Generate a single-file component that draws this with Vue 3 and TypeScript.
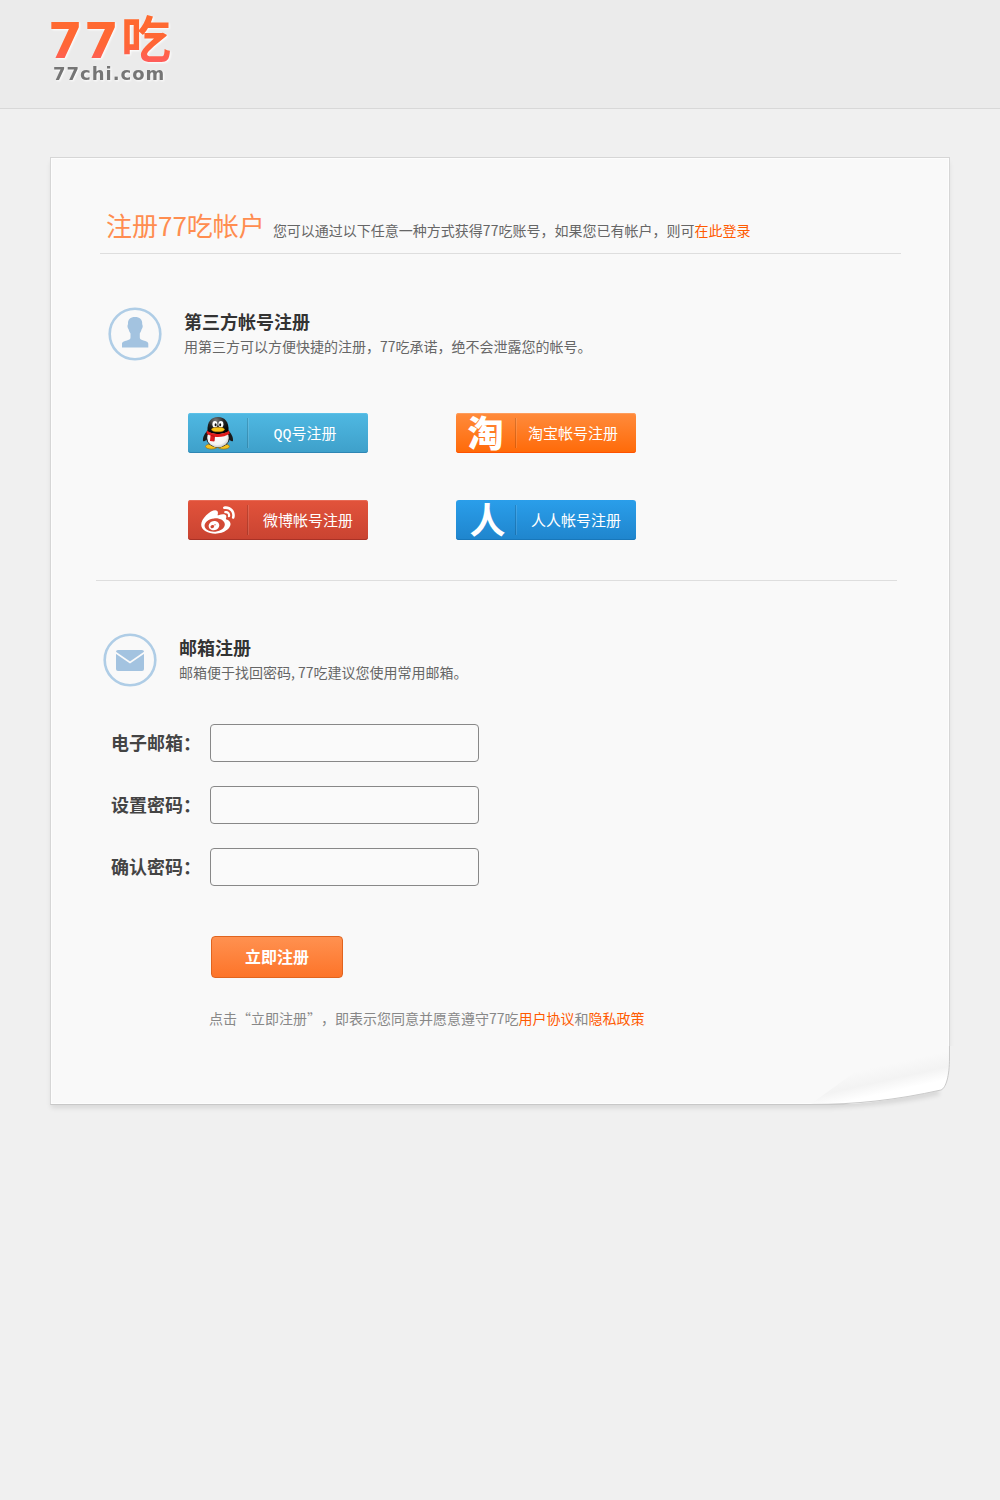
<script setup lang="ts">
import { reactive } from 'vue'

interface Field {
  id: 'email' | 'password' | 'confirm'
  label: string
  type: string
}

const fields: Field[] = [
  { id: 'email', label: '电子邮箱：', type: 'email' },
  { id: 'password', label: '设置密码：', type: 'password' },
  { id: 'confirm', label: '确认密码：', type: 'password' },
]

const form = reactive({ email: '', password: '', confirm: '' })
</script>

<template>
  <header class="top">
    <a class="logo" href="#" aria-label="77吃 77chi.com">
      <svg width="124" height="76" viewBox="0 0 124 76">
        <defs>
          <linearGradient id="logo-fill" gradientUnits="userSpaceOnUse" x1="0" y1="6" x2="0" y2="56">
            <stop offset="0" stop-color="#ff6a2e" />
            <stop offset="0.6" stop-color="#ff6637" />
            <stop offset="1" stop-color="#ff5c62" />
          </linearGradient>
        </defs>
        <g fill="url(#logo-fill)">
          <text class="logo-digit" x="-2" y="49">7</text>
          <text class="logo-digit" x="34" y="49">7</text>
          <text class="logo-han" x="71" y="49">吃</text>
        </g>
        <text class="logo-domain" x="3" y="71">77chi.com</text>
      </svg>
    </a>
  </header>

  <main class="panel">
    <div class="heading">
      <h1>注册77吃帐户</h1>
      <p>您可以通过以下任意一种方式获得77吃账号，如果您已有帐户，则可<a href="#">在此登录</a></p>
    </div>

    <section class="block social">
      <div class="intro">
        <svg class="badge" viewBox="0 0 54 54" aria-hidden="true">
          <circle cx="27" cy="27" r="25.3" fill="none" stroke="#afcde6" stroke-width="2.6" />
          <path
            fill="#a3c3e0"
            d="M27 10c4.600 0 7.500 2.600 7.200 6.800 0 1 .6 1.300.5 2.600-.1 1.500-.8 2-1.200 3.200-.4 1.800-1 2.900-1.700 3.800v4.200c0 1.500 1 2 3 2.700 4 1.300 5.500 1.700 5.500 3.700v3.500H14V37c0-2 1.500-2.400 5.500-3.700 2-.7 3-1.200 3-2.700v-4.200c-.8-.9-1.400-2-1.800-3.800-.4-1.200-1.100-1.700-1.200-3.200-.1-1.300.5-1.600.5-2.600C19.700 12.600 22.400 10 27 10z"
          />
        </svg>
        <div class="intro-text">
          <h2>第三方帐号注册</h2>
          <p>用第三方可以方便快捷的注册，77吃承诺，绝不会泄露您的帐号。</p>
        </div>
      </div>

      <div class="providers">
        <button type="button" class="provider qq">
          <span class="mark">
            <svg width="32" height="34" viewBox="0 0 32 34" aria-hidden="true">
              <defs>
                <radialGradient id="qq-head" cx="0.4" cy="0.2" r="0.8">
                  <stop offset="0" stop-color="#7a7a7a" />
                  <stop offset="0.5" stop-color="#222" />
                  <stop offset="1" stop-color="#000" />
                </radialGradient>
                <radialGradient id="qq-belly" cx="0.45" cy="0.4" r="0.65">
                  <stop offset="0" stop-color="#fff" />
                  <stop offset="0.7" stop-color="#f4f4f4" />
                  <stop offset="1" stop-color="#bbb" />
                </radialGradient>
              </defs>
              <ellipse cx="9.500" cy="30.500" rx="6" ry="2.600" fill="#f6c21c" stroke="#a56a00" stroke-width=".6" />
              <ellipse cx="21.500" cy="30.500" rx="6" ry="2.600" fill="#f6c21c" stroke="#a56a00" stroke-width=".6" />
              <path fill="#1a1a1a" d="M6 14C3 17 .5 21 1 25c1.500 1 3.500-1 5-3zM26 14c3 3 5.500 7 5 11-1.500 1-3.500-1-5-3z" />
              <ellipse cx="16" cy="21" rx="12" ry="10.500" fill="#1a1a1a" />
              <ellipse cx="16" cy="22" rx="10.800" ry="9.300" fill="url(#qq-belly)" />
              <path fill="url(#qq-head)" d="M5.500 15C5 6 9 1 16 1s11 5 10.500 14c-3 4-18 4-21 0z" />
              <ellipse cx="12.900" cy="8.300" rx="2.500" ry="3.300" fill="#fff" />
              <ellipse cx="18.900" cy="8.300" rx="2.500" ry="3.300" fill="#fff" />
              <ellipse cx="13.600" cy="8.800" rx="1" ry="1.500" fill="#111" />
              <ellipse cx="18.200" cy="8.800" rx="1" ry="1.500" fill="#111" />
              <ellipse cx="16" cy="13.500" rx="6.500" ry="2.300" fill="#f8c51b" stroke="#b87a00" stroke-width=".5" />
              <path fill="#e01b1b" d="M5 14.500c5 4.500 17 4.500 22 0l.7 3c-4 3-10 4.200-15.200 3.300l-.3 4.800-4.200-.6.500-5.500C6.500 18.900 5 18 4.500 17z" />
              <path fill="none" stroke="#a30d0d" stroke-width=".7" d="M12.500 20.500 9 19.300M12.500 20.500l-.4 4.600" />
            </svg>
          </span>
          <span class="caption">QQ号注册</span>
        </button>

        <button type="button" class="provider taobao">
          <span class="mark glyph" aria-hidden="true">淘</span>
          <span class="caption">淘宝帐号注册</span>
        </button>

        <button type="button" class="provider weibo">
          <span class="mark">
            <svg width="34" height="28" viewBox="0 2 24 20" aria-hidden="true">
              <path
                fill="#fff"
                d="M10.098 20.323c-3.977.391-7.414-1.406-7.672-4.020-.259-2.609 2.759-5.047 6.740-5.441 3.979-.394 7.413 1.404 7.671 4.018.259 2.600-2.759 5.049-6.737 5.439l-.002.004zM9.050 17.219c-.384.616-1.208.884-1.829.602-.612-.279-.793-.991-.406-1.593.379-.595 1.176-.861 1.793-.601.622.263.820.972.442 1.592zm1.270-1.627c-.141.237-.449.353-.689.253-.236-.090-.313-.361-.177-.586.138-.227.436-.346.672-.240.239.090.315.360.180.601l.014-.028zm.176-2.719c-1.893-.493-4.033.450-4.857 2.118-.836 1.704-.026 3.591 1.886 4.210 1.983.640 4.318-.341 5.132-2.179.800-1.793-.201-3.642-2.161-4.149zm7.563-1.224c-.346-.105-.570-.180-.405-.615.375-.977.420-1.804 0-2.404-.781-1.112-2.915-1.053-5.364-.030 0 0-.766.331-.571-.271.376-1.217.315-2.224-.270-2.809-1.338-1.337-4.869.045-7.888 3.080C1.309 10.870 0 13.273 0 15.348c0 3.981 5.099 6.395 10.086 6.395 6.536 0 10.888-3.801 10.888-6.820 0-1.822-1.547-2.854-2.915-3.284v.010zm1.908-5.092c-.766-.856-1.908-1.187-2.960-.962-.436.090-.706.511-.616.932.090.420.511.691.932.602.511-.105 1.067.044 1.442.465.376.421.466.977.316 1.473-.136.406.089.856.510.992.405.119.857-.105.992-.512.330-1.021.120-2.178-.646-3.035l.030.045zm2.418-2.195c-1.576-1.757-3.905-2.419-6.054-1.968-.496.104-.812.587-.706 1.081.104.496.586.813 1.082.707 1.532-.331 3.185.150 4.296 1.383 1.112 1.246 1.429 2.943.947 4.416-.165.480.106 1.007.586 1.157.479.165.991-.104 1.157-.586.675-2.088.241-4.478-1.338-6.235l.030.045z"
              />
            </svg>
          </span>
          <span class="caption">微博帐号注册</span>
        </button>

        <button type="button" class="provider renren">
          <span class="mark glyph" aria-hidden="true">人</span>
          <span class="caption">人人帐号注册</span>
        </button>
      </div>
    </section>

    <section class="block mail">
      <div class="intro">
        <svg class="badge" viewBox="0 0 54 54" aria-hidden="true">
          <circle cx="27" cy="27" r="25.300" fill="none" stroke="#afcde6" stroke-width="2.600" />
          <rect x="13" y="17" width="28" height="21" rx="2" fill="#a3c3e0" />
          <path fill="none" stroke="#fafafa" stroke-width="1.600" d="M12.500 19.500 27 29.500l14.500-10" />
        </svg>
        <div class="intro-text">
          <h2>邮箱注册</h2>
          <p>邮箱便于找回密码, 77吃建议您使用常用邮箱。</p>
        </div>
      </div>

      <form @submit.prevent>
        <div v-for="field in fields" :key="field.id" class="row">
          <label :for="field.id">{{ field.label }}</label>
          <input :id="field.id" v-model="form[field.id]" :type="field.type" />
        </div>
        <button type="submit" class="submit">立即注册</button>
        <p class="terms">点击“立即注册”，即表示您同意并愿意遵守77吃<a href="#">用户协议</a>和<a href="#">隐私政策</a></p>
      </form>
    </section>

    <svg class="curl" width="160" height="70" viewBox="0 0 160 70" aria-hidden="true">
      <defs>
        <linearGradient id="curl-fill" gradientUnits="userSpaceOnUse" x1="88" y1="18" x2="94" y2="45">
          <stop offset="0" stop-color="#f9f9f9" />
          <stop offset="0.55" stop-color="#f3f3f3" />
          <stop offset="1" stop-color="#fff" />
        </linearGradient>
        <filter id="curl-shadow" x="-20%" y="-50%" width="140%" height="200%">
          <feGaussianBlur stdDeviation="2" />
        </filter>
        <clipPath id="curl-outside">
          <path d="M30 59C65 58 100 53 140 44c5-2 8-14 8-32V0h12v70H30z" />
        </clipPath>
      </defs>
      <path fill="url(#curl-fill)" d="M10 58 70 14 148 0v12c0 18-3 30-8 32C95 54 50 58 10 58z" />
      <g clip-path="url(#curl-outside)">
        <rect width="160" height="70" fill="#f0f0f0" />
        <path
          fill="none"
          stroke="#000"
          stroke-opacity=".1"
          stroke-width="6"
          filter="url(#curl-shadow)"
          d="M-10 60C50 60 95 56 138 46"
        />
      </g>
      <path fill="none" stroke="#cacaca" d="M10 58.500C55 58.500 95 54 140 44c5-2 8.500-14 8.500-32V0" />
    </svg>
  </main>
</template>

<style>
body {
  margin: 0;
  background: #f0f0f0;
  font-family: 'Noto Sans CJK SC', sans-serif;
}
</style>

<style scoped>
h1,
h2,
p {
  margin: 0;
}

a {
  color: #ff5a00;
  text-decoration: none;
}

.top {
  height: 108px;
  padding-left: 50px;
  background: #ebebeb;
  border-bottom: 1px solid #d8d8d8;
}

.logo {
  display: inline-block;
  padding-top: 9px;
}

.logo svg {
  display: block;
  overflow: visible;
  filter: drop-shadow(1px 1px 1px #fff);
}

.logo-digit {
  font: bold 50px 'DejaVu Sans', sans-serif;
}

.logo-han {
  font: bold 50px 'Noto Sans CJK SC', sans-serif;
}

.logo-domain {
  font: bold 18px 'DejaVu Sans', sans-serif;
  letter-spacing: 1px;
  fill: #757575;
}

.panel {
  position: relative;
  margin: 48px 50px;
  background: #f9f9f9;
  border: 1px solid #d6d6d6;
  border-bottom-color: #c8c8c8;
  box-shadow:
    inset 0 0 0 1px #fdfdfd,
    0 4px 5px -1px rgba(0, 0, 0, 0.1);
  text-spacing-trim: space-all;
}

.heading {
  display: flex;
  align-items: baseline;
  gap: 8px;
  margin: 0 48px 0 49px;
  padding: 49px 0 10px 6px;
  border-bottom: 1px solid #dedede;
}

.heading h1 {
  font-size: 26px;
  line-height: 36px;
  font-weight: 400;
  color: #ff8d50;
}

.heading p,
.intro p {
  font-size: 14px;
  color: #666;
}

.block {
  margin: 0 52px 0 45px;
}

.social {
  padding: 53px 0 40px 12px;
  border-bottom: 1px solid #dedede;
}

.mail {
  padding: 52px 0 75px 7px;
}

.intro {
  display: flex;
  gap: 22px;
}

.badge {
  width: 54px;
  height: 54px;
}

.intro-text {
  padding-top: 2px;
}

.intro h2 {
  font-size: 18px;
  line-height: 24px;
  color: #333;
}

.intro p {
  line-height: 26px;
}

.providers {
  display: grid;
  grid-template-columns: 180px 180px;
  gap: 47px 88px;
  margin: 52px 0 0 80px;
}

.provider {
  display: flex;
  align-items: center;
  height: 40px;
  padding: 0;
  border: 0;
  border-radius: 3px;
  color: #fff;
  font: 15px 'Liberation Mono', 'Noto Sans CJK SC', monospace;
  cursor: pointer;
}

.mark {
  box-sizing: border-box;
  display: flex;
  align-items: center;
  justify-content: center;
  width: 60px;
  height: 30px;
  border-right: 1px solid rgba(0, 0, 0, 0.15);
  box-shadow: 1px 0 rgba(255, 255, 255, 0.12);
}

.glyph {
  padding-bottom: 4px;
  font: 900 36px 'Noto Sans CJK SC', sans-serif;
  line-height: 26px;
}

.caption {
  flex: 1;
  text-align: center;
}

.qq {
  background: linear-gradient(#4fb8e2, #3ea0ca);
  box-shadow: inset 0 1px #5cc1e8, inset 0 -1px #2f86b4;
}

.taobao {
  background: linear-gradient(#ff8b3c, #ff6a08);
  box-shadow: inset 0 1px #ff9d5c, inset 0 -1px #ff5200;
}

.qq .caption,
.taobao .caption {
  padding-right: 6px;
}

.weibo {
  background: linear-gradient(#e2533b, #c94331);
  box-shadow: inset 0 1px #e86a55, inset 0 -1px #a83226;
}

.renren {
  background: linear-gradient(#2a9eea, #1f85cd);
  box-shadow: inset 0 -1px #1877ba;
}

.renren .glyph {
  padding-left: 4px;
  font-weight: 700;
}

form {
  display: flex;
  flex-direction: column;
  align-items: flex-start;
  gap: 24px;
  margin-top: 37px;
  padding-left: 8px;
}

.row {
  display: flex;
  align-items: center;
}

.row label {
  width: 99px;
  padding-bottom: 3px;
  font-size: 18px;
  font-weight: 700;
  color: #444;
}

.row input {
  box-sizing: border-box;
  width: 269px;
  height: 38px;
  padding: 0 10px;
  background: #fafafa;
  border: 1px solid #888;
  border-radius: 4px;
  font-size: 16px;
}

.submit {
  width: 132px;
  height: 42px;
  margin: 26px 0 0 100px;
  padding: 0 0 2px;
  background: linear-gradient(#ff9150, #fd7429);
  border: 1px solid #e0641f;
  border-radius: 4px;
  color: #fff;
  font: bold 16px 'Noto Sans CJK SC', sans-serif;
  cursor: pointer;
}

.terms {
  margin: 6px 0 1px 98px;
  font-size: 14px;
  line-height: 20px;
  color: #888;
}

.curl {
  position: absolute;
  right: -12px;
  bottom: -12px;
}
</style>
